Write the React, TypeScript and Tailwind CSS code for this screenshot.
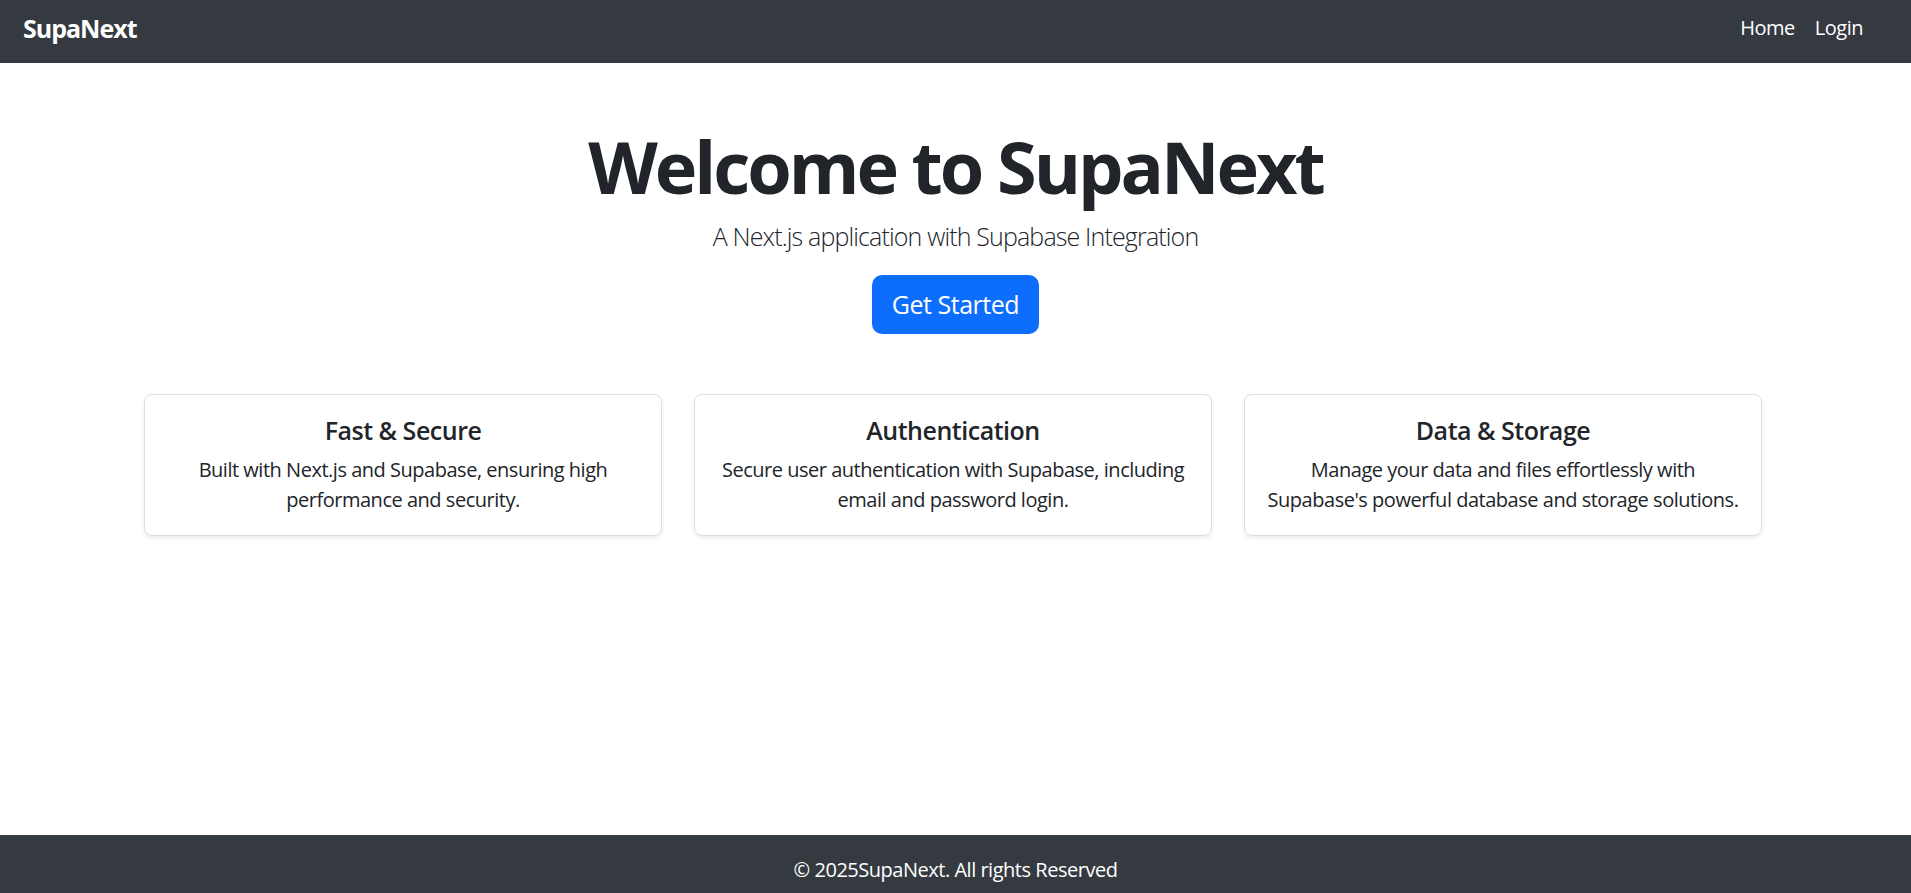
import React from "react";

const cards = [
  {
    title: "Fast & Secure",
    body: ["Built with Next.js and Supabase, ensuring high", "performance and security."],
  },
  {
    title: "Authentication",
    body: ["Secure user authentication with Supabase, including", "email and password login."],
  },
  {
    title: "Data & Storage",
    body: ["Manage your data and files effortlessly with", "Supabase's powerful database and storage solutions."],
  },
];

export default function App() {
  return (
    <div className="min-h-[905px] flex flex-col bg-white font-['Open_Sans',sans-serif] tracking-[-0.03em] text-[#212529]">
      <nav className="h-[63px] bg-[#343a40] flex items-start justify-between pt-[13px] pl-[23px] pr-[48px]">
        <span className="text-[25px] leading-[30px] font-bold text-white tracking-[-0.04em]">SupaNext</span>
        <div className="flex gap-[20px] text-[20px] leading-[30px] text-white">
          <a href="#">Home</a>
          <a href="#">Login</a>
        </div>
      </nav>
      <main className="flex-1 flex flex-col items-center pt-[60px]">
        <h1 className="text-[72px] leading-[86px] font-bold tracking-[-0.042em] text-[#212529]">
          Welcome to SupaNext
        </h1>
        <p className="mt-[9px] text-[25px] leading-[37px] font-light tracking-[-0.034em] text-[#212529]">
          A Next.js application with Supabase Integration
        </p>
        <button className="mt-[20px] h-[59px] px-[20px] rounded-[10px] bg-[#0d6efd] text-white text-[25px] leading-[37px]">
          Get Started
        </button>
        <div className="mt-[60px] mr-[5px] w-[1618px] grid grid-cols-3 gap-[32px]">
          {cards.map((c) => (
            <div
              key={c.title}
              className="border border-[#dcdee0] rounded-[8px] shadow-[0_2px_5px_rgba(0,0,0,0.08)] p-[20px] text-center"
            >
              <h5 className="text-[25px] leading-[30px] font-semibold mb-[10px]">{c.title}</h5>
              <p className="text-[20px] leading-[30px] whitespace-nowrap">
                {c.body[0]}
                <br />
                {c.body[1]}
              </p>
            </div>
          ))}
        </div>
      </main>
      <footer className="bg-[#343a40] text-white text-center py-[20px] text-[20px] leading-[30px]">
        © 2025SupaNext. All rights Reserved
      </footer>
    </div>
  );
}
